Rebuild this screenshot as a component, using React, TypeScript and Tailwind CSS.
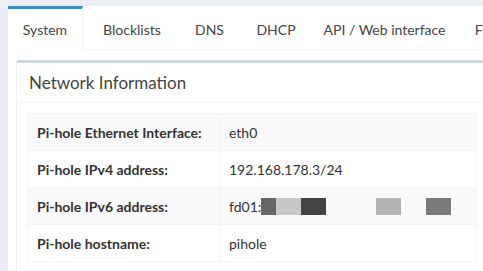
const tabs = [
  { label: "System", w: "w-[75px]", active: true },
  { label: "Blocklists", w: "w-[88px]" },
  { label: "DNS", w: "w-[57px]" },
  { label: "DHCP", w: "w-[66px]" },
  { label: "API / Web interface", w: "w-[141px]" },
  { label: "Filtering", w: "w-[80px]" },
]

const rows = [
  { label: "Pi-hole Ethernet Interface:", value: "eth0" },
  { label: "Pi-hole IPv4 address:", value: "192.168.178.3/24" },
  { label: "Pi-hole IPv6 address:", value: "fd01:", redacted: true },
  { label: "Pi-hole hostname:", value: "pihole" },
]

export default function App() {
  return (
    <div className="w-[483px] h-[271px] overflow-hidden bg-[#ecf0f5] pt-[6px] pl-[8px] font-['Lato',sans-serif] text-[#444]">
      <div className="bg-white w-[600px] h-full shadow-[0_1px_1px_rgba(0,0,0,0.1)]">
        {/* Tabs */}
        <div className="flex gap-[5px] border-b border-[#f4f4f4] h-[44px]">
          {tabs.map((t) => (
            <div
              key={t.label}
              className={`${t.w} shrink-0 flex items-center justify-center text-[14px] whitespace-nowrap border-t-[3px] ${
                t.active ? "border-[#3c8dbc] border-r border-r-[#f4f4f4] -mb-px bg-white" : "border-transparent"
              }`}
            >
              <span>{t.label}</span>
            </div>
          ))}
        </div>

        {/* Tab content */}
        <div className="pt-[10px] pl-[9px]">
          <div className="border-t-[3px] border-[#d2d6de] shadow-[0_1px_1px_rgba(0,0,0,0.1),-1px_0_0_#f4f4f4] bg-white">
            <div className="h-[40px] flex items-center pl-[12px] border-b border-[#f4f4f4]">
              <h3 className="text-[17px] leading-none -mt-[1px]">Network Information</h3>
            </div>
            <div className="p-[10px] pr-0">
              <table className="w-[450px] border-collapse text-[14px] border border-[#f4f4f4]">
                <tbody>
                  {rows.map((r, i) => (
                    <tr key={r.label} className={i % 2 === 0 ? "bg-[#f9f9f9]" : "bg-white"}>
                      <th className="w-[193px] h-[37px] text-left font-bold px-[9px] border border-[#f4f4f4] text-[#333]">
                        {r.label}
                      </th>
                      <td className="h-[37px] px-[8px] border border-[#f4f4f4] text-[#333]">
                        {r.redacted ? (
                          <span className="flex items-center">
                            <span>{r.value}</span>
                            <span className="inline-block w-[15px] h-[17px] bg-[#666]" />
                            <span className="inline-block w-[25px] h-[17px] bg-[#c8c8c8]" />
                            <span className="inline-block w-[25px] h-[17px] bg-[#444]" />
                            <span className="inline-block w-[50px] h-[17px]" />
                            <span className="inline-block w-[25px] h-[17px] bg-[#b4b4b4]" />
                            <span className="inline-block w-[25px] h-[17px]" />
                            <span className="inline-block w-[25px] h-[17px] bg-[#7a7a7a]" />
                          </span>
                        ) : (
                          r.value
                        )}
                      </td>
                    </tr>
                  ))}
                </tbody>
              </table>
            </div>
          </div>
        </div>
      </div>
    </div>
  )
}
